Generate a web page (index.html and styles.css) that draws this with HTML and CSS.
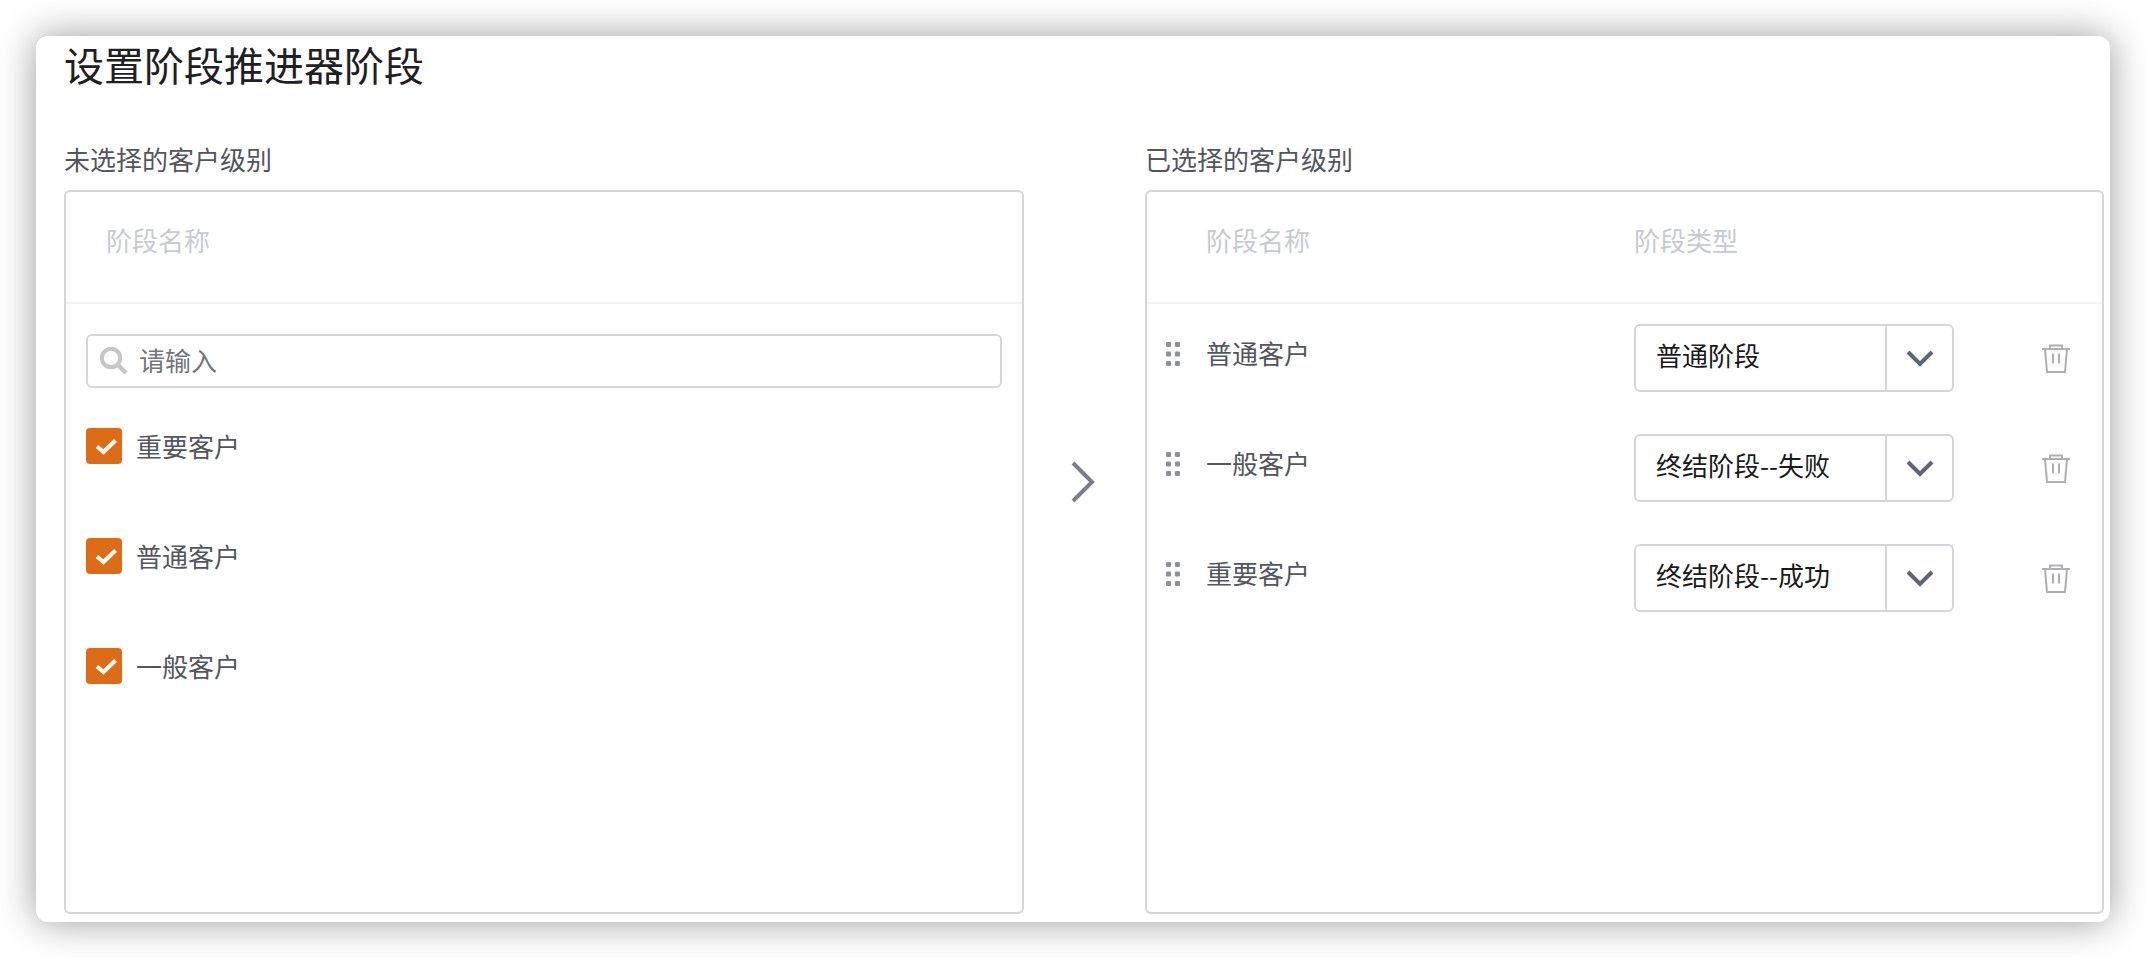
FILE: index.html
```html
<!DOCTYPE html>
<html lang="zh-CN">
<head>
<meta charset="utf-8">
<title>设置阶段推进器阶段</title>
<link rel="stylesheet" href="styles.css">
</head>
<body>
<main class="card">
  <h1 class="title">设置阶段推进器阶段</h1>
  <div class="columns">
    <section class="column">
      <h2 class="label">未选择的客户级别</h2>
      <div class="panel">
        <div class="panel-head head-left"><span>阶段名称</span></div>
        <div class="left-body">
          <div class="search">
            <svg class="search-icon" viewBox="0 0 28 28" width="28" height="28"><circle cx="11" cy="11" r="9.200" fill="none" stroke="#c6c6c6" stroke-width="4"/><path d="M17.500 17.500l8.500 8.500" stroke="#c6c6c6" stroke-width="4.500" fill="none"/></svg>
            <span class="search-text">请输入</span>
          </div>
          <ul class="check-list">
            <li class="check-row"><span class="checkbox"><svg viewBox="0 0 36 36" width="36" height="36"><path d="M11 18.500l6.500 5.500 12-11.500" fill="none" stroke="#fff" stroke-width="4"/></svg></span><span>重要客户</span></li>
            <li class="check-row"><span class="checkbox"><svg viewBox="0 0 36 36" width="36" height="36"><path d="M11 18.500l6.500 5.500 12-11.500" fill="none" stroke="#fff" stroke-width="4"/></svg></span><span>普通客户</span></li>
            <li class="check-row"><span class="checkbox"><svg viewBox="0 0 36 36" width="36" height="36"><path d="M11 18.500l6.500 5.500 12-11.500" fill="none" stroke="#fff" stroke-width="4"/></svg></span><span>一般客户</span></li>
          </ul>
        </div>
      </div>
    </section>
    <div class="transfer">
      <svg viewBox="0 0 26 44" width="26" height="44"><path d="M3 3l19 19L3 41" fill="none" stroke="#7b7e88" stroke-width="4"/></svg>
    </div>
    <section class="column">
      <h2 class="label">已选择的客户级别</h2>
      <div class="panel">
        <div class="panel-head head-right"><span class="col-name">阶段名称</span><span>阶段类型</span></div>
        <ul class="stage-list">
          <li class="stage-row">
            <svg class="handle" viewBox="0 0 14 24" width="14" height="24"><g fill="#8d909a"><rect width="5" height="5" rx="1"/><rect x="9" width="5" height="5" rx="1"/><rect y="9.500" width="5" height="5" rx="1"/><rect x="9" y="9.500" width="5" height="5" rx="1"/><rect y="19" width="5" height="5" rx="1"/><rect x="9" y="19" width="5" height="5" rx="1"/></g></svg>
            <span class="stage-name">普通客户</span>
            <div class="select"><span class="select-value">普通阶段</span><span class="select-arrow"><svg viewBox="0 0 28 18" width="28" height="18"><path d="M2 3l12 12L26 3" fill="none" stroke="#5f6476" stroke-width="4"/></svg></span></div>
            <svg class="trash" viewBox="0 0 28 30" width="28" height="30"><path d="M0 5h28M8 4.500V1.500h12v3M3 5l2 23h18l2-23M11 9.500v10M17 9.500v10" fill="none" stroke="#aeafb2" stroke-width="2"/></svg>
          </li>
          <li class="stage-row">
            <svg class="handle" viewBox="0 0 14 24" width="14" height="24"><g fill="#8d909a"><rect width="5" height="5" rx="1"/><rect x="9" width="5" height="5" rx="1"/><rect y="9.500" width="5" height="5" rx="1"/><rect x="9" y="9.500" width="5" height="5" rx="1"/><rect y="19" width="5" height="5" rx="1"/><rect x="9" y="19" width="5" height="5" rx="1"/></g></svg>
            <span class="stage-name">一般客户</span>
            <div class="select"><span class="select-value">终结阶段--失败</span><span class="select-arrow"><svg viewBox="0 0 28 18" width="28" height="18"><path d="M2 3l12 12L26 3" fill="none" stroke="#5f6476" stroke-width="4"/></svg></span></div>
            <svg class="trash" viewBox="0 0 28 30" width="28" height="30"><path d="M0 5h28M8 4.500V1.500h12v3M3 5l2 23h18l2-23M11 9.500v10M17 9.500v10" fill="none" stroke="#aeafb2" stroke-width="2"/></svg>
          </li>
          <li class="stage-row">
            <svg class="handle" viewBox="0 0 14 24" width="14" height="24"><g fill="#8d909a"><rect width="5" height="5" rx="1"/><rect x="9" width="5" height="5" rx="1"/><rect y="9.500" width="5" height="5" rx="1"/><rect x="9" y="9.500" width="5" height="5" rx="1"/><rect y="19" width="5" height="5" rx="1"/><rect x="9" y="19" width="5" height="5" rx="1"/></g></svg>
            <span class="stage-name">重要客户</span>
            <div class="select"><span class="select-value">终结阶段--成功</span><span class="select-arrow"><svg viewBox="0 0 28 18" width="28" height="18"><path d="M2 3l12 12L26 3" fill="none" stroke="#5f6476" stroke-width="4"/></svg></span></div>
            <svg class="trash" viewBox="0 0 28 30" width="28" height="30"><path d="M0 5h28M8 4.500V1.500h12v3M3 5l2 23h18l2-23M11 9.500v10M17 9.500v10" fill="none" stroke="#aeafb2" stroke-width="2"/></svg>
          </li>
        </ul>
      </div>
    </section>
  </div>
</main>
</body>
</html>
```

FILE: styles.css
```css
* { box-sizing: border-box; }
html, body { margin: 0; height: 100%; background: #fff; overflow: hidden; }
body {
  padding: 36px;
  font-family: "Noto Sans CJK SC", "Noto Sans", sans-serif;
  font-size: 26px;
  line-height: 36px;
  color: #53565f;
}
ul { list-style: none; margin: 0; padding: 0; }
.card {
  width: 2074px;
  height: 886px;
  padding: 1px 6px 8px 28px;
  background: #fff;
  border-radius: 12px;
  box-shadow: 0 0 38px rgba(0, 0, 0, .4);
}
.title {
  margin: 0 0 50px;
  font-size: 40px;
  line-height: 54px;
  font-weight: 400;
  color: #1f2023;
}
.columns { display: grid; grid-template-columns: 960px 121px 959px; }
.label { margin: 0 0 13px; font-size: 26px; line-height: 36px; font-weight: 400; }
.panel {
  height: 724px;
  border: 2px solid #d6d6d6;
  border-radius: 6px;
}
.panel-head {
  display: flex;
  height: 112px;
  padding-top: 30px;
  border-bottom: 2px solid #f0f3f7;
  color: #c8cad3;
}
.head-left { padding-left: 40px; }
.head-right { padding-left: 59px; }
.col-name { width: 428px; }
.left-body { padding: 30px 20px 0; }
.search {
  display: flex;
  align-items: center;
  height: 54px;
  padding-left: 12px;
  border: 2px solid #d6d6d6;
  border-radius: 6px;
}
.search-icon { flex: none; }
.search-text { margin-left: 11px; padding-bottom: 2px; color: #74767c; }
.check-list { padding-top: 40px; }
.check-row { display: flex; height: 110px; line-height: 36px; }
.checkbox {
  flex: none;
  width: 36px;
  height: 36px;
  margin-right: 14px;
  background: #de6c17;
  border-radius: 4px;
}
.checkbox svg { display: block; }
.transfer { display: flex; justify-content: center; align-items: flex-start; padding: 319px 3px 0 0; }
.stage-list { padding-top: 20px; }
.stage-row { display: flex; align-items: flex-start; height: 110px; padding-left: 19px; }
.handle { flex: none; margin: 18px 26px 0 0; }
.stage-name { flex: none; width: 428px; padding-top: 11px; }
.select {
  flex: none;
  display: flex;
  width: 320px;
  height: 68px;
  border: 2px solid #d4d6dc;
  border-radius: 6px;
  color: #1a1a1a;
}
.select-value { flex: 1; padding: 11px 0 0 20px; }
.select-arrow {
  display: flex;
  align-items: center;
  justify-content: center;
  width: 67px;
  border-left: 2px solid #d4d6dc;
}
.trash { flex: none; margin: 20px 0 0 88px; }
```
